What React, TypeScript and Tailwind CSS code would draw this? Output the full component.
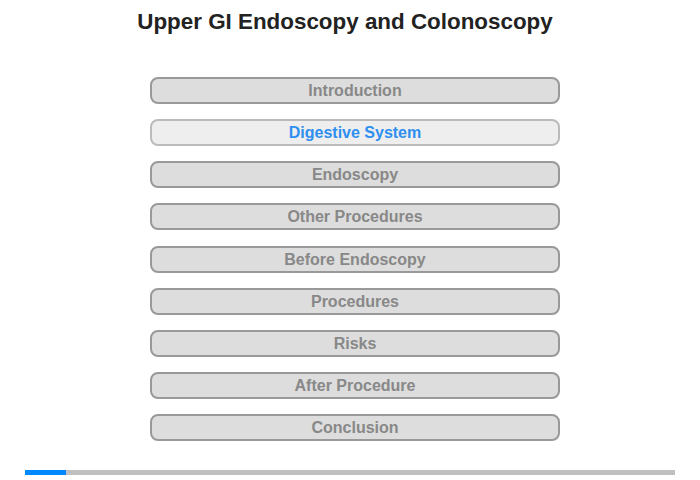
import { useState } from 'react';

const chapters = [
    'Introduction',
    'Digestive System',
    'Endoscopy',
    'Other Procedures',
    'Before Endoscopy',
    'Procedures',
    'Risks',
    'After Procedure',
    'Conclusion',
];

export default function App() {
    const [active, setActive] = useState(1);

    return (
        <div className="h-[480px] w-[700px] bg-white font-['Liberation_Sans',Arial,sans-serif]">
            <h1 className="pt-[9px] pr-[10px] text-center text-[22.4px] leading-[26px] font-bold text-[#222]">
                Upper GI Endoscopy and Colonoscopy
            </h1>

            <div className="mt-[42px] ml-[150px] flex w-[410px] flex-col gap-[15.125px]">
                {chapters.map((name, i) => (
                    <button
                        key={name}
                        onClick={() => setActive(i)}
                        className={
                            i === active
                                ? 'h-[27px] rounded-[8px] border-2 border-[#bbbbbb] bg-[#eeeeee] text-[16px] leading-[23px] font-bold text-[#2e8ff0]'
                                : 'h-[27px] rounded-[8px] border-2 border-[#999999] bg-[#dddddd] text-[16px] leading-[23px] font-bold text-[#888888]'
                        }
                    >
                        {name}
                    </button>
                ))}
            </div>

            <div className="mt-[29px] ml-[25px] flex h-[5px] w-[650px] bg-[#c0c0c0]">
                <div className="h-full w-[41px] bg-[#0088ff]" />
            </div>
        </div>
    );
}
